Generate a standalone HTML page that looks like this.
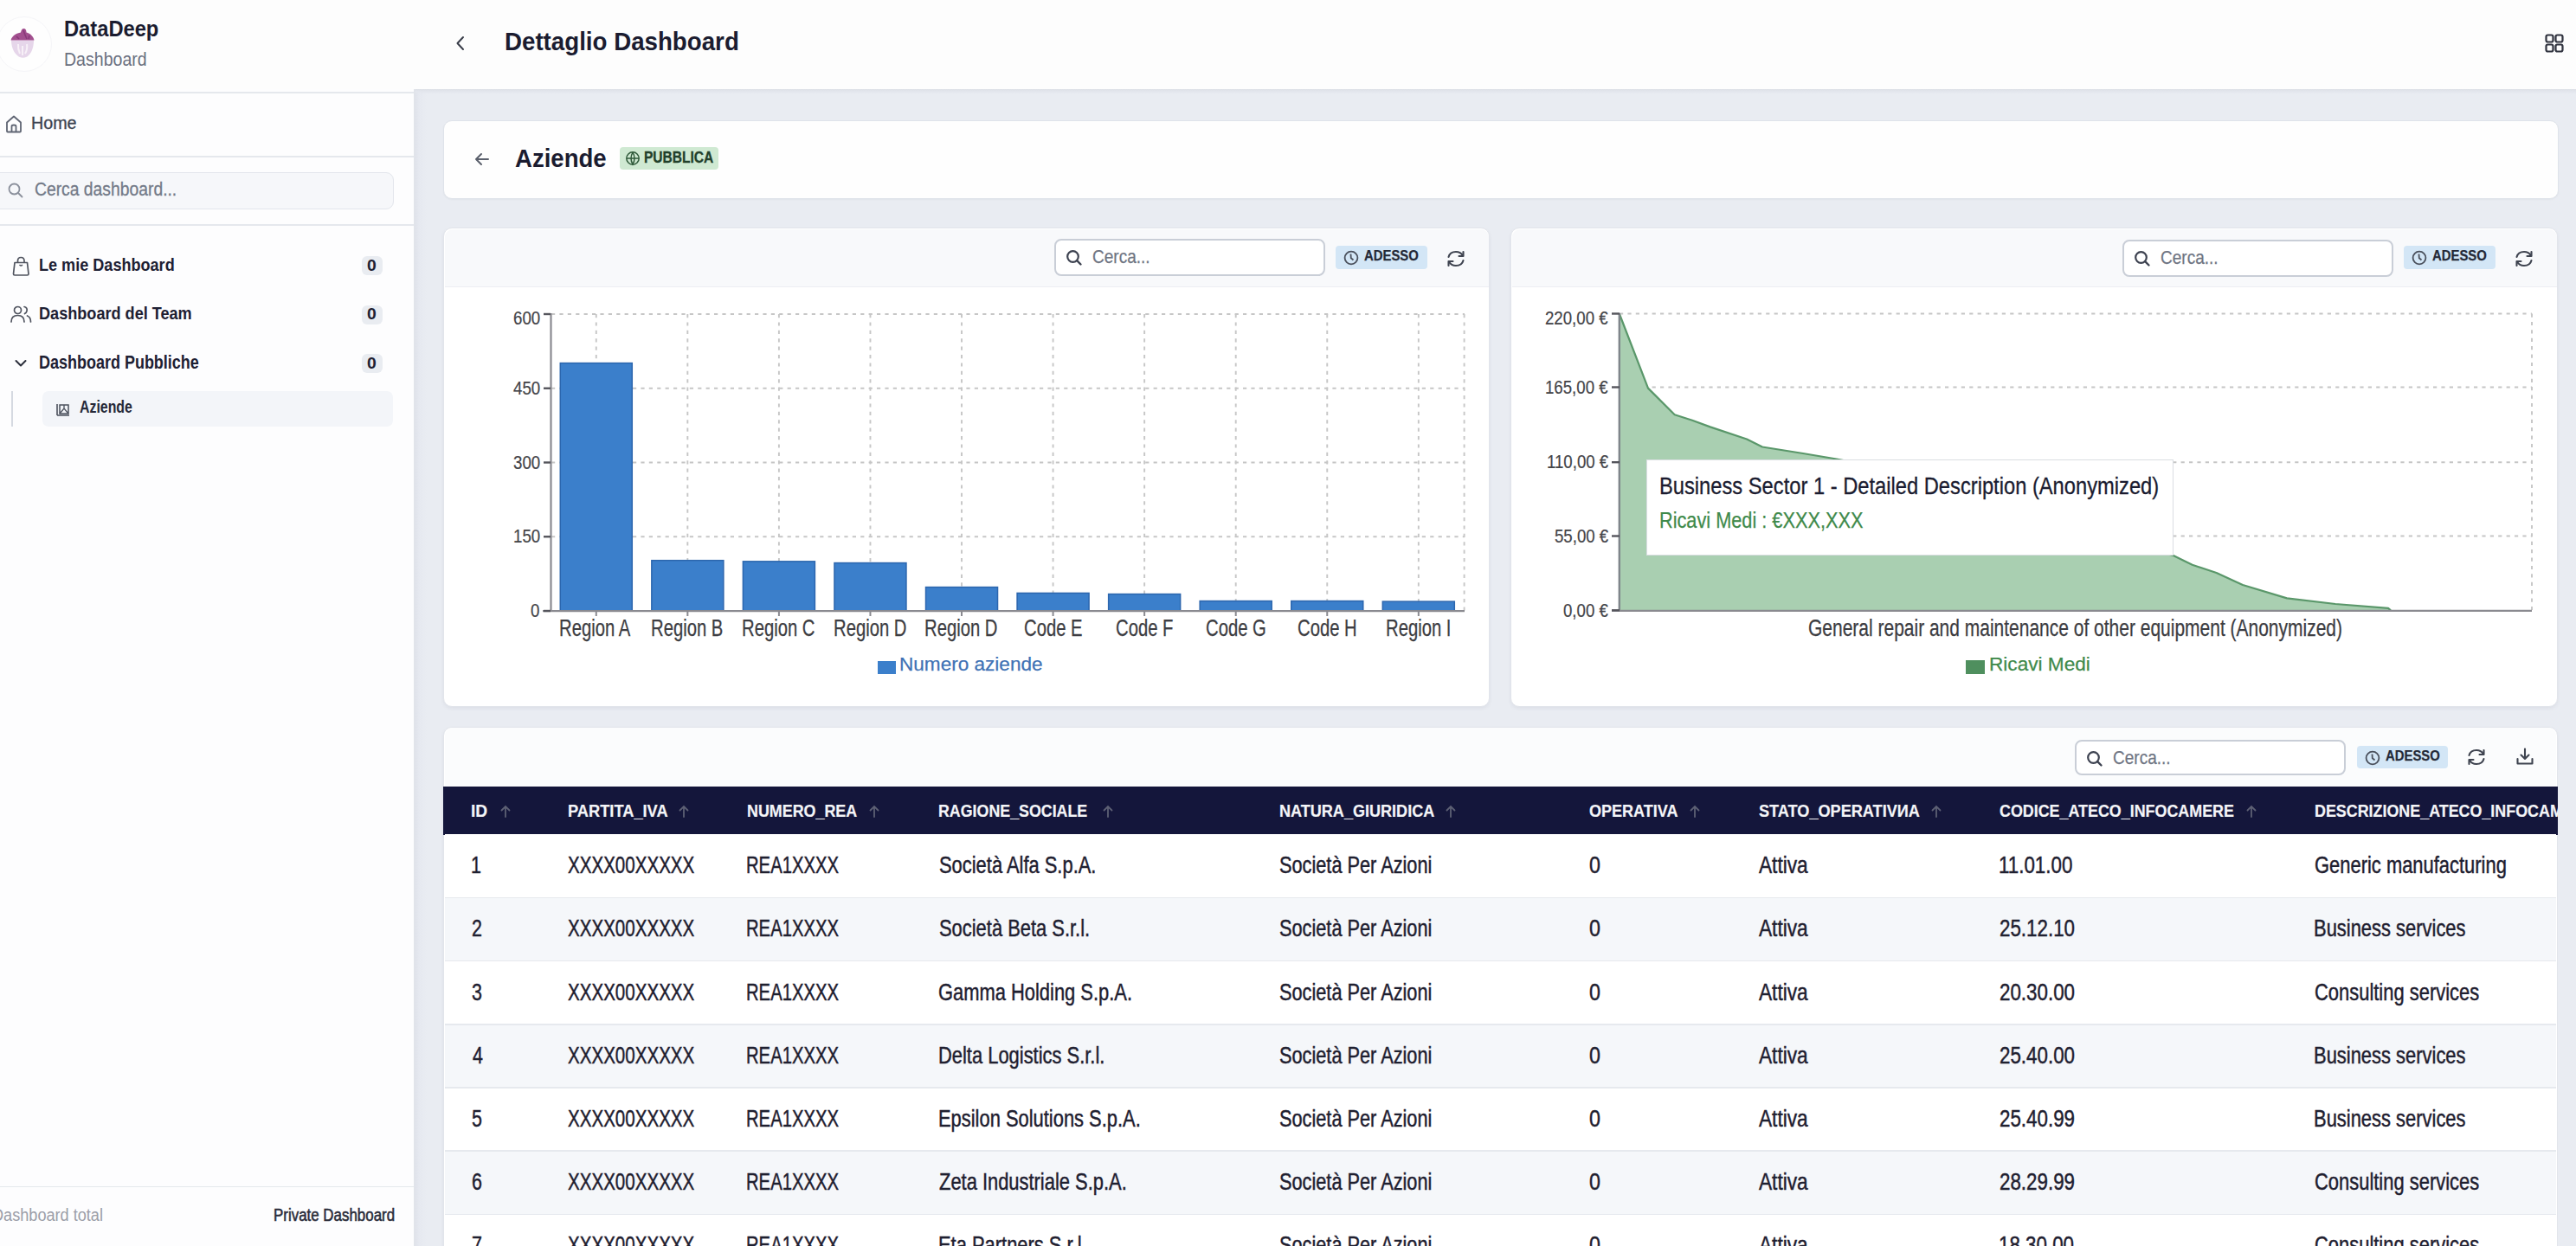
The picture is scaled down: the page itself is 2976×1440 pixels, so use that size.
<!DOCTYPE html>
<html><head><meta charset="utf-8"><style>
html,body{margin:0;padding:0;}
body{width:2976px;height:1440px;overflow:hidden;position:relative;background:#e9ecf2;font-family:"Liberation Sans",sans-serif;}
.t{position:absolute;white-space:pre;transform-origin:0 0;}
</style></head><body>
<div style="position:absolute;left:479px;top:103px;width:14px;height:1337px;background:linear-gradient(90deg,#dfe2ea,#e6e9f0 40%,rgba(233,236,242,0));"></div>
<div style="position:absolute;left:478px;top:103px;width:2498px;height:6px;background:linear-gradient(180deg,#dcdfe6,#e3e6ed 40%,rgba(233,236,242,0));"></div>
<div style="position:absolute;left:0px;top:0px;width:2976px;height:103px;background:#fdfdfd;"></div>
<div style="position:absolute;left:0px;top:103px;width:478px;height:1337px;background:#fdfdfe;"></div>
<div style="position:absolute;left:478px;top:103px;width:1.5px;height:1337px;background:#e1e4ea;"></div>
<div style="position:absolute;left:0px;top:106px;width:478px;height:1.5px;background:#e5e8ed;"></div>
<div style="position:absolute;left:0px;top:180px;width:478px;height:1.5px;background:#e5e8ed;"></div>
<div style="position:absolute;left:0px;top:259px;width:478px;height:1.5px;background:#e5e8ed;"></div>
<div style="position:absolute;left:0px;top:1370.5px;width:478px;height:1.5px;background:#e5e8ed;"></div>
<div style="position:absolute;left:-4px;top:19px;width:62px;height:62px;border-radius:50%;border:1px solid #f5f5f8;background:#fefefe"></div>
<svg style="position:absolute;left:12px;top:32px" width="28" height="36" viewBox="0 0 28 36">
<path d="M1 14.5 L27 14.5 C27 22 25 28 21 32 C18 35.5 11 35.5 8 32 C3.5 28 1 22 1 14.5 Z" fill="#e6d6ea"/>
<path d="M9 19 Q8.5 25 11 30 M19 19 Q20 25 17 30 M14 21 L14 32" stroke="#f7f0f7" stroke-width="2" fill="none"/>
<path d="M0.5 14.5 C2 9 7 6.5 12 5.5 C12.5 3 13.5 1 15.5 1 C17.5 1 18.5 3 18.5 5.5 C23 6.5 26.5 10 27.5 14.5 Z" fill="#a2508f"/>
<path d="M15 3 C16 6 17 9 19 13 M7 10 L10 13 M22 9 L21 13" stroke="#7e2f70" stroke-width="1.6" fill="none" opacity="0.7"/>
</svg>
<svg style="position:absolute;left:6px;top:132px" width="20" height="22" viewBox="0 0 20 22"><path d="M2 9.5 L10 2.5 L18 9.5 L18 19.5 Q18 20.5 17 20.5 L3 20.5 Q2 20.5 2 19.5 Z M7.5 20.5 L7.5 14 Q7.5 12.5 10 12.5 Q12.5 12.5 12.5 14 L12.5 20.5" fill="none" stroke="#5f6573" stroke-width="1.8" stroke-linejoin="round"/></svg>
<div style="position:absolute;left:-10px;top:198.5px;width:464.5px;height:43px;background:#f6f7fa;border:1.5px solid #e3e6ec;border-radius:9px;box-sizing:border-box;"></div>
<svg style="position:absolute;left:8px;top:210px" width="20" height="20" viewBox="0 0 20 20"><circle cx="8.5" cy="8.5" r="6" fill="none" stroke="#8b909c" stroke-width="1.8"/><path d="M13 13 L17.5 17.5" stroke="#8b909c" stroke-width="1.8" stroke-linecap="round"/></svg>
<svg style="position:absolute;left:13px;top:295px" width="22" height="26" viewBox="0 0 22 26"><path d="M4 8.5 L18.5 8.5 L20 21.5 Q20 23 18.5 23 L4 23 Q2.5 23 2.5 21.5 Z" fill="none" stroke="#50545f" stroke-width="1.7" stroke-linejoin="round"/><path d="M7.5 8.5 L7.5 6.5 Q7.5 2.5 11.2 2.5 Q15 2.5 15 6.5 L15 8.5" fill="none" stroke="#50545f" stroke-width="1.7"/><path d="M9.5 11 Q11.2 13 13 11" fill="none" stroke="#50545f" stroke-width="1.3"/></svg>
<svg style="position:absolute;left:11px;top:352px" width="27" height="22" viewBox="0 0 27 22"><circle cx="9.5" cy="6.5" r="4" fill="none" stroke="#50545f" stroke-width="1.7"/><path d="M2 20 Q2 12.5 9.5 12.5 Q17 12.5 17 20" fill="none" stroke="#50545f" stroke-width="1.7" stroke-linecap="round"/><path d="M17 2.5 Q21 3.5 20 7.5 Q19.5 9.5 17.5 10.5 M20.5 13 Q24.5 14.5 24.5 20" fill="none" stroke="#50545f" stroke-width="1.7" stroke-linecap="round"/></svg>
<svg style="position:absolute;left:16px;top:413px" width="16" height="14" viewBox="0 0 16 14"><path d="M2.5 4 L8 9.5 L13.5 4" fill="none" stroke="#2a2d3a" stroke-width="2" stroke-linecap="round" stroke-linejoin="round"/></svg>
<div style="position:absolute;left:418px;top:296px;width:23.5px;height:22px;background:#e9ecf1;border-radius:6px;"></div>
<div style="position:absolute;left:418px;top:352.5px;width:23.5px;height:22px;background:#e9ecf1;border-radius:6px;"></div>
<div style="position:absolute;left:418px;top:408.5px;width:23.5px;height:22px;background:#e9ecf1;border-radius:6px;"></div>
<div style="position:absolute;left:13px;top:451.5px;width:2px;height:41.5px;background:#d5d9e1;"></div>
<div style="position:absolute;left:49px;top:451.5px;width:405px;height:41px;background:#f3f5f9;border-radius:7px;"></div>
<svg style="position:absolute;left:64px;top:464px" width="18" height="18" viewBox="0 0 18 18"><path d="M2 16 L2 3 M2 16 L16 16" stroke="#4b505c" stroke-width="1.6" fill="none"/><rect x="5" y="4" width="10" height="10" fill="none" stroke="#4b505c" stroke-width="1.5"/><path d="M5 14 L10 8 L15 14 M10 4 L10 8" stroke="#4b505c" stroke-width="1.3" fill="none"/></svg>
<svg style="position:absolute;left:524px;top:40px" width="16" height="20" viewBox="0 0 16 20"><path d="M11 3 L4.5 10 L11 17" fill="none" stroke="#3a3e4a" stroke-width="2" stroke-linecap="round" stroke-linejoin="round"/></svg>
<svg style="position:absolute;left:2939px;top:38px" width="24" height="24" viewBox="0 0 24 24"><g fill="none" stroke="#30333f" stroke-width="2.2"><rect x="2.5" y="2.5" width="8" height="8" rx="2"/><rect x="13.5" y="2.5" width="8" height="8" rx="2"/><rect x="2.5" y="13.5" width="8" height="8" rx="2"/><rect x="13.5" y="13.5" width="8" height="8" rx="2"/></g></svg>
<div style="position:absolute;left:512px;top:138.5px;width:2443.5px;height:91px;background:#fefefe;border:1.5px solid #dfe3ea;border-radius:10px;box-sizing:border-box;box-shadow:0 1px 2px rgba(30,40,60,0.04);"></div>
<svg style="position:absolute;left:546px;top:175px" width="22" height="18" viewBox="0 0 22 18"><path d="M18 9 L4 9 M10 3 L4 9 L10 15" fill="none" stroke="#5b606c" stroke-width="2" stroke-linecap="round" stroke-linejoin="round"/></svg>
<div style="position:absolute;left:716px;top:170px;width:114px;height:26px;background:#cfe9d2;border-radius:4px;"></div>
<svg style="position:absolute;left:722px;top:174px" width="18" height="18" viewBox="0 0 18 18"><g fill="none" stroke="#2f5a3a" stroke-width="1.5"><circle cx="9" cy="9" r="7.2"/><path d="M2 9 L16 9 M9 2 Q5 9 9 16 Q13 9 9 2"/></g></svg>
<div style="position:absolute;left:512px;top:263px;width:1209px;height:554px;background:#ffffff;border:1.5px solid #e2e5eb;border-radius:10px;box-sizing:border-box;box-shadow:0 2px 4px rgba(30,40,70,0.06);overflow:hidden;"></div>
<div style="position:absolute;left:513.5px;top:264.5px;width:1206px;height:66.0px;background:#f8f9fb;border-radius:9px 9px 0 0;"></div>
<div style="position:absolute;left:513.5px;top:330.5px;width:1206px;height:1.5px;background:#eceef2;"></div>
<div style="position:absolute;left:1745px;top:263px;width:1210px;height:554px;background:#ffffff;border:1.5px solid #e2e5eb;border-radius:10px;box-sizing:border-box;box-shadow:0 2px 4px rgba(30,40,70,0.06);overflow:hidden;"></div>
<div style="position:absolute;left:1746.5px;top:264.5px;width:1207px;height:66.0px;background:#f8f9fb;border-radius:9px 9px 0 0;"></div>
<div style="position:absolute;left:1746.5px;top:330.5px;width:1207px;height:1.5px;background:#eceef2;"></div>
<div style="position:absolute;left:1218px;top:276px;width:313px;height:43px;background:#fff;border:2px solid #c9ced7;border-radius:8px;box-sizing:border-box;"></div>
<svg style="position:absolute;left:1230px;top:287px" width="22" height="22" viewBox="0 0 22 22"><circle cx="9.5" cy="9.5" r="6.3" fill="none" stroke="#3d4250" stroke-width="2.2"/><path d="M14.2 14.2 L18.5 18.5" stroke="#3d4250" stroke-width="2.4" stroke-linecap="round"/></svg>
<div style="position:absolute;left:1543px;top:284px;width:106px;height:27px;background:#d3e6f6;border-radius:4px;"></div>
<svg style="position:absolute;left:1552px;top:288.5px" width="18" height="18" viewBox="0 0 18 18"><g fill="none" stroke="#4a505c" stroke-width="1.8"><circle cx="9" cy="9" r="7.4"/><path d="M8.5 4.5 L8.8 9.2 L11.5 11.5"/></g></svg>
<svg style="position:absolute;left:1670px;top:288px" width="24" height="22" viewBox="0 0 24 22"><g fill="none" stroke="#3f4450" stroke-width="2.1" stroke-linecap="round" stroke-linejoin="round"><path d="M3.5 9 Q5 3 12 3 Q17.5 3 20 7.5"/><path d="M20.5 3 L20.5 8 L15.5 8"/><path d="M20.5 13 Q19 19 12 19 Q6.5 19 4 14.5"/><path d="M3.5 19 L3.5 14 L8.5 14"/></g></svg>
<div style="position:absolute;left:2452px;top:276.5px;width:313px;height:43px;background:#fff;border:2px solid #c9ced7;border-radius:8px;box-sizing:border-box;"></div>
<svg style="position:absolute;left:2464px;top:287.5px" width="22" height="22" viewBox="0 0 22 22"><circle cx="9.5" cy="9.5" r="6.3" fill="none" stroke="#3d4250" stroke-width="2.2"/><path d="M14.2 14.2 L18.5 18.5" stroke="#3d4250" stroke-width="2.4" stroke-linecap="round"/></svg>
<div style="position:absolute;left:2777px;top:284px;width:106px;height:27px;background:#d3e6f6;border-radius:4px;"></div>
<svg style="position:absolute;left:2786px;top:288.5px" width="18" height="18" viewBox="0 0 18 18"><g fill="none" stroke="#4a505c" stroke-width="1.8"><circle cx="9" cy="9" r="7.4"/><path d="M8.5 4.5 L8.8 9.2 L11.5 11.5"/></g></svg>
<svg style="position:absolute;left:2904px;top:288px" width="24" height="22" viewBox="0 0 24 22"><g fill="none" stroke="#3f4450" stroke-width="2.1" stroke-linecap="round" stroke-linejoin="round"><path d="M3.5 9 Q5 3 12 3 Q17.5 3 20 7.5"/><path d="M20.5 3 L20.5 8 L15.5 8"/><path d="M20.5 13 Q19 19 12 19 Q6.5 19 4 14.5"/><path d="M3.5 19 L3.5 14 L8.5 14"/></g></svg>
<svg style="position:absolute;left:0;top:0" width="2976" height="1440" viewBox="0 0 2976 1440">
<line x1="637" y1="620.25" x2="1692" y2="620.25" stroke="#c6c6c6" stroke-width="1.9" stroke-dasharray="4.2 5.2" fill="none"/>
<line x1="637" y1="534.5" x2="1692" y2="534.5" stroke="#c6c6c6" stroke-width="1.9" stroke-dasharray="4.2 5.2" fill="none"/>
<line x1="637" y1="448.75" x2="1692" y2="448.75" stroke="#c6c6c6" stroke-width="1.9" stroke-dasharray="4.2 5.2" fill="none"/>
<line x1="637" y1="363.0" x2="1692" y2="363.0" stroke="#c6c6c6" stroke-width="1.9" stroke-dasharray="4.2 5.2" fill="none"/>
<line x1="688.78" y1="363" x2="688.78" y2="706" stroke="#c6c6c6" stroke-width="1.9" stroke-dasharray="4.2 5.2" fill="none"/>
<line x1="794.3399999999999" y1="363" x2="794.3399999999999" y2="706" stroke="#c6c6c6" stroke-width="1.9" stroke-dasharray="4.2 5.2" fill="none"/>
<line x1="899.9" y1="363" x2="899.9" y2="706" stroke="#c6c6c6" stroke-width="1.9" stroke-dasharray="4.2 5.2" fill="none"/>
<line x1="1005.46" y1="363" x2="1005.46" y2="706" stroke="#c6c6c6" stroke-width="1.9" stroke-dasharray="4.2 5.2" fill="none"/>
<line x1="1111.02" y1="363" x2="1111.02" y2="706" stroke="#c6c6c6" stroke-width="1.9" stroke-dasharray="4.2 5.2" fill="none"/>
<line x1="1216.58" y1="363" x2="1216.58" y2="706" stroke="#c6c6c6" stroke-width="1.9" stroke-dasharray="4.2 5.2" fill="none"/>
<line x1="1322.1399999999999" y1="363" x2="1322.1399999999999" y2="706" stroke="#c6c6c6" stroke-width="1.9" stroke-dasharray="4.2 5.2" fill="none"/>
<line x1="1427.6999999999998" y1="363" x2="1427.6999999999998" y2="706" stroke="#c6c6c6" stroke-width="1.9" stroke-dasharray="4.2 5.2" fill="none"/>
<line x1="1533.2599999999998" y1="363" x2="1533.2599999999998" y2="706" stroke="#c6c6c6" stroke-width="1.9" stroke-dasharray="4.2 5.2" fill="none"/>
<line x1="1638.82" y1="363" x2="1638.82" y2="706" stroke="#c6c6c6" stroke-width="1.9" stroke-dasharray="4.2 5.2" fill="none"/>
<line x1="1691.6" y1="363" x2="1691.6" y2="706" stroke="#c6c6c6" stroke-width="1.9" stroke-dasharray="4.2 5.2" fill="none"/>
<rect x="647.28" y="419.595" width="83" height="286.405" fill="#3b7fcb" stroke="#2c66ae" stroke-width="1.5"/>
<rect x="752.8399999999999" y="647.69" width="83" height="58.309999999999945" fill="#3b7fcb" stroke="#2c66ae" stroke-width="1.5"/>
<rect x="858.4" y="648.8333333333334" width="83" height="57.16666666666663" fill="#3b7fcb" stroke="#2c66ae" stroke-width="1.5"/>
<rect x="963.96" y="650.5483333333333" width="83" height="55.45166666666671" fill="#3b7fcb" stroke="#2c66ae" stroke-width="1.5"/>
<rect x="1069.52" y="678.56" width="83" height="27.440000000000055" fill="#3b7fcb" stroke="#2c66ae" stroke-width="1.5"/>
<rect x="1175.08" y="685.42" width="83" height="20.58000000000004" fill="#3b7fcb" stroke="#2c66ae" stroke-width="1.5"/>
<rect x="1280.6399999999999" y="686.5633333333333" width="83" height="19.436666666666724" fill="#3b7fcb" stroke="#2c66ae" stroke-width="1.5"/>
<rect x="1386.1999999999998" y="694.5666666666667" width="83" height="11.43333333333328" fill="#3b7fcb" stroke="#2c66ae" stroke-width="1.5"/>
<rect x="1491.7599999999998" y="694.5666666666667" width="83" height="11.43333333333328" fill="#3b7fcb" stroke="#2c66ae" stroke-width="1.5"/>
<rect x="1597.32" y="695.1383333333333" width="83" height="10.861666666666679" fill="#3b7fcb" stroke="#2c66ae" stroke-width="1.5"/>
<line x1="636.5" y1="362" x2="636.5" y2="707" stroke="#8a8a90" stroke-width="2.2"/>
<line x1="627" y1="706.2" x2="1692" y2="706.2" stroke="#8a8a90" stroke-width="2.2"/>
<line x1="628" y1="706.0" x2="636" y2="706.0" stroke="#55555c" stroke-width="2.4"/>
<line x1="628" y1="620.25" x2="636" y2="620.25" stroke="#55555c" stroke-width="2.4"/>
<line x1="628" y1="534.5" x2="636" y2="534.5" stroke="#55555c" stroke-width="2.4"/>
<line x1="628" y1="448.75" x2="636" y2="448.75" stroke="#55555c" stroke-width="2.4"/>
<line x1="628" y1="363.0" x2="636" y2="363.0" stroke="#55555c" stroke-width="2.4"/>
<line x1="688.78" y1="706" x2="688.78" y2="712" stroke="#8a8a90" stroke-width="2"/>
<line x1="794.3399999999999" y1="706" x2="794.3399999999999" y2="712" stroke="#8a8a90" stroke-width="2"/>
<line x1="899.9" y1="706" x2="899.9" y2="712" stroke="#8a8a90" stroke-width="2"/>
<line x1="1005.46" y1="706" x2="1005.46" y2="712" stroke="#8a8a90" stroke-width="2"/>
<line x1="1111.02" y1="706" x2="1111.02" y2="712" stroke="#8a8a90" stroke-width="2"/>
<line x1="1216.58" y1="706" x2="1216.58" y2="712" stroke="#8a8a90" stroke-width="2"/>
<line x1="1322.1399999999999" y1="706" x2="1322.1399999999999" y2="712" stroke="#8a8a90" stroke-width="2"/>
<line x1="1427.6999999999998" y1="706" x2="1427.6999999999998" y2="712" stroke="#8a8a90" stroke-width="2"/>
<line x1="1533.2599999999998" y1="706" x2="1533.2599999999998" y2="712" stroke="#8a8a90" stroke-width="2"/>
<line x1="1638.82" y1="706" x2="1638.82" y2="712" stroke="#8a8a90" stroke-width="2"/>
<g stroke="#c6c6c6" stroke-width="1.9" stroke-dasharray="4.2 5.2" fill="none">
<line x1="1871" y1="362.5" x2="2925" y2="362.5"/>
<line x1="1871" y1="447.5" x2="2925" y2="447.5"/>
<line x1="1871" y1="534.2" x2="2925" y2="534.2"/>
<line x1="1871" y1="619.5" x2="2925" y2="619.5"/>
<line x1="2925" y1="362.5" x2="2925" y2="705"/></g>
<path d="M1870.8,362.5 L1904,448.6 L1934.7,479.3 L1955,485.7 L1975.7,493.4 L2018,507.5 L2036,516.5 L2083,524 L2121.7,530.5 L2200,545 L2300,575 L2400,605 L2480,635 L2510.8,642 L2532.7,652.8 L2560.6,662 L2591,676 L2642,691.4 L2698,698 L2759,702.8 L2762,705.3 L1870.8,705.3 Z" fill="#a9cfb1"/>
<path d="M1870.8,362.5 L1904,448.6 L1934.7,479.3 L1955,485.7 L1975.7,493.4 L2018,507.5 L2036,516.5 L2083,524 L2121.7,530.5 L2200,545 L2300,575 L2400,605 L2480,635 L2510.8,642 L2532.7,652.8 L2560.6,662 L2591,676 L2642,691.4 L2698,698 L2759,702.8 L2762,705.3" fill="none" stroke="#5a976a" stroke-width="2.2" stroke-linejoin="round"/>
<line x1="1870.8" y1="362" x2="1870.8" y2="706" stroke="#7f858a" stroke-width="2.4"/>
<line x1="1862" y1="705.8" x2="2925" y2="705.8" stroke="#8a8a90" stroke-width="2.2"/>
<line x1="1862" y1="362.5" x2="1871" y2="362.5" stroke="#55555c" stroke-width="2.4"/>
<line x1="1862" y1="447.5" x2="1871" y2="447.5" stroke="#55555c" stroke-width="2.4"/>
<line x1="1862" y1="534.2" x2="1871" y2="534.2" stroke="#55555c" stroke-width="2.4"/>
<line x1="1862" y1="619.5" x2="1871" y2="619.5" stroke="#55555c" stroke-width="2.4"/>
<line x1="1862" y1="705.3" x2="1871" y2="705.3" stroke="#55555c" stroke-width="2.4"/>
</svg>
<div style="position:absolute;left:1014px;top:763.6px;width:21px;height:15px;background:#3b7fcb;"></div>
<div style="position:absolute;left:1902px;top:530.8px;width:609px;height:111px;background:#fff;border:1px solid #dadde2;box-sizing:border-box;"></div>
<div style="position:absolute;left:2271px;top:762.7px;width:22px;height:16px;background:#4f8f5e;"></div>
<div style="position:absolute;left:512px;top:839.5px;width:2442.5px;height:700px;background:#fff;border:1.5px solid #e2e5eb;border-radius:10px;box-sizing:border-box;box-shadow:0 2px 4px rgba(30,40,70,0.06);"></div>
<div style="position:absolute;left:513.5px;top:841px;width:2439.5px;height:68px;background:#fbfcfd;border-radius:9px 9px 0 0;"></div>
<div style="position:absolute;left:2396.5px;top:854.5px;width:313px;height:41px;background:#fff;border:2px solid #c9ced7;border-radius:8px;box-sizing:border-box;"></div>
<svg style="position:absolute;left:2408.5px;top:865.5px" width="22" height="22" viewBox="0 0 22 22"><circle cx="9.5" cy="9.5" r="6.3" fill="none" stroke="#3d4250" stroke-width="2.2"/><path d="M14.2 14.2 L18.5 18.5" stroke="#3d4250" stroke-width="2.4" stroke-linecap="round"/></svg>
<div style="position:absolute;left:2723px;top:862px;width:105px;height:26px;background:#d3e6f6;border-radius:4px;"></div>
<svg style="position:absolute;left:2732px;top:866.5px" width="18" height="18" viewBox="0 0 18 18"><g fill="none" stroke="#4a505c" stroke-width="1.8"><circle cx="9" cy="9" r="7.4"/><path d="M8.5 4.5 L8.8 9.2 L11.5 11.5"/></g></svg>
<svg style="position:absolute;left:2849px;top:864px" width="24" height="22" viewBox="0 0 24 22"><g fill="none" stroke="#3f4450" stroke-width="2.1" stroke-linecap="round" stroke-linejoin="round"><path d="M3.5 9 Q5 3 12 3 Q17.5 3 20 7.5"/><path d="M20.5 3 L20.5 8 L15.5 8"/><path d="M20.5 13 Q19 19 12 19 Q6.5 19 4 14.5"/><path d="M3.5 19 L3.5 14 L8.5 14"/></g></svg>
<svg style="position:absolute;left:2905px;top:863px" width="24" height="22" viewBox="0 0 24 22"><g fill="none" stroke="#3f4450" stroke-width="2.1" stroke-linecap="round" stroke-linejoin="round"><path d="M12 2.5 L12 13.5 M7.5 9.5 L12 14 L16.5 9.5"/><path d="M3.5 14 L3.5 19.5 L20.5 19.5 L20.5 14"/></g></svg>
<div style="position:absolute;left:512px;top:909px;width:2442.5px;height:55.5px;background:#14163b;"></div>
<svg style="position:absolute;left:577.5px;top:930px" width="12" height="15" viewBox="0 0 12 15"><path d="M6 14 L6 2 M1.5 6.5 L6 2 L10.5 6.5" fill="none" stroke="#5d6074" stroke-width="1.8" stroke-linecap="round"/></svg>
<svg style="position:absolute;left:783.7px;top:930px" width="12" height="15" viewBox="0 0 12 15"><path d="M6 14 L6 2 M1.5 6.5 L6 2 L10.5 6.5" fill="none" stroke="#5d6074" stroke-width="1.8" stroke-linecap="round"/></svg>
<svg style="position:absolute;left:1004px;top:930px" width="12" height="15" viewBox="0 0 12 15"><path d="M6 14 L6 2 M1.5 6.5 L6 2 L10.5 6.5" fill="none" stroke="#5d6074" stroke-width="1.8" stroke-linecap="round"/></svg>
<svg style="position:absolute;left:1274px;top:930px" width="12" height="15" viewBox="0 0 12 15"><path d="M6 14 L6 2 M1.5 6.5 L6 2 L10.5 6.5" fill="none" stroke="#5d6074" stroke-width="1.8" stroke-linecap="round"/></svg>
<svg style="position:absolute;left:1670px;top:930px" width="12" height="15" viewBox="0 0 12 15"><path d="M6 14 L6 2 M1.5 6.5 L6 2 L10.5 6.5" fill="none" stroke="#5d6074" stroke-width="1.8" stroke-linecap="round"/></svg>
<svg style="position:absolute;left:1952px;top:930px" width="12" height="15" viewBox="0 0 12 15"><path d="M6 14 L6 2 M1.5 6.5 L6 2 L10.5 6.5" fill="none" stroke="#5d6074" stroke-width="1.8" stroke-linecap="round"/></svg>
<svg style="position:absolute;left:2231px;top:930px" width="12" height="15" viewBox="0 0 12 15"><path d="M6 14 L6 2 M1.5 6.5 L6 2 L10.5 6.5" fill="none" stroke="#5d6074" stroke-width="1.8" stroke-linecap="round"/></svg>
<svg style="position:absolute;left:2595px;top:930px" width="12" height="15" viewBox="0 0 12 15"><path d="M6 14 L6 2 M1.5 6.5 L6 2 L10.5 6.5" fill="none" stroke="#5d6074" stroke-width="1.8" stroke-linecap="round"/></svg>
<div style="position:absolute;left:513.5px;top:964.2px;width:2439.5px;height:73.2px;background:#ffffff;"></div>
<div style="position:absolute;left:513.5px;top:1037.4px;width:2439.5px;height:73.2px;background:#f5f7fa;"></div>
<div style="position:absolute;left:513.5px;top:1036.65px;width:2439.5px;height:1.5px;background:#e6e9ee;"></div>
<div style="position:absolute;left:513.5px;top:1110.6000000000001px;width:2439.5px;height:73.2px;background:#ffffff;"></div>
<div style="position:absolute;left:513.5px;top:1109.8500000000001px;width:2439.5px;height:1.5px;background:#e6e9ee;"></div>
<div style="position:absolute;left:513.5px;top:1183.8000000000002px;width:2439.5px;height:73.2px;background:#f5f7fa;"></div>
<div style="position:absolute;left:513.5px;top:1183.0500000000002px;width:2439.5px;height:1.5px;background:#e6e9ee;"></div>
<div style="position:absolute;left:513.5px;top:1257.0px;width:2439.5px;height:73.2px;background:#ffffff;"></div>
<div style="position:absolute;left:513.5px;top:1256.25px;width:2439.5px;height:1.5px;background:#e6e9ee;"></div>
<div style="position:absolute;left:513.5px;top:1330.2px;width:2439.5px;height:73.2px;background:#f5f7fa;"></div>
<div style="position:absolute;left:513.5px;top:1329.45px;width:2439.5px;height:1.5px;background:#e6e9ee;"></div>
<div style="position:absolute;left:513.5px;top:1403.4px;width:2439.5px;height:73.2px;background:#ffffff;"></div>
<div style="position:absolute;left:513.5px;top:1402.65px;width:2439.5px;height:1.5px;background:#e6e9ee;"></div>
<div class="t" style="left:74.38px;top:22.06px;font-size:24.85px;line-height:24.85px;font-weight:700;color:#1b1c30;transform:scaleX(0.9541);">DataDeep</div>
<div class="t" style="left:74.24px;top:57.74px;font-size:21.80px;line-height:21.80px;font-weight:400;color:#6b7080;transform:scaleX(0.8969);">Dashboard</div>
<div class="t" style="left:36.42px;top:132.15px;font-size:20.49px;line-height:20.49px;font-weight:400;color:#3d4452;transform:scaleX(0.9620);-webkit-text-stroke:0.35px #3d4452;">Home</div>
<div class="t" style="left:40.03px;top:208.04px;font-size:21.80px;line-height:21.80px;font-weight:400;color:#737a88;transform:scaleX(0.8859);-webkit-text-stroke:0.30px #737a88;">Cerca dashboard...</div>
<div class="t" style="left:44.91px;top:295.72px;font-size:20.64px;line-height:20.64px;font-weight:700;color:#1e2033;transform:scaleX(0.8763);">Le mie Dashboard</div>
<div class="t" style="left:44.91px;top:352.20px;font-size:20.78px;line-height:20.78px;font-weight:700;color:#1e2033;transform:scaleX(0.8717);">Dashboard del Team</div>
<div class="t" style="left:44.92px;top:408.43px;font-size:21.22px;line-height:21.22px;font-weight:700;color:#1e2033;transform:scaleX(0.8474);">Dashboard Pubbliche</div>
<div class="t" style="left:423.92px;top:298.73px;font-size:17.44px;line-height:17.44px;font-weight:700;color:#1e2033;transform:scaleX(1.1116);">0</div>
<div class="t" style="left:423.92px;top:355.23px;font-size:17.44px;line-height:17.44px;font-weight:700;color:#1e2033;transform:scaleX(1.1116);">0</div>
<div class="t" style="left:423.92px;top:411.53px;font-size:17.44px;line-height:17.44px;font-weight:700;color:#1e2033;transform:scaleX(1.1116);">0</div>
<div class="t" style="left:91.98px;top:461.34px;font-size:19.91px;line-height:19.91px;font-weight:700;color:#262938;transform:scaleX(0.7981);">Aziende</div>
<div class="t" style="left:-9.45px;top:1394.86px;font-size:19.77px;line-height:19.77px;font-weight:400;color:#9b9ea8;transform:scaleX(0.9170);">Dashboard total</div>
<div class="t" style="left:316.05px;top:1394.86px;font-size:19.77px;line-height:19.77px;font-weight:400;color:#2a2c3a;transform:scaleX(0.8558);-webkit-text-stroke:0.55px #2a2c3a;">Private Dashboard</div>
<div class="t" style="left:582.54px;top:33.25px;font-size:29.94px;line-height:29.94px;font-weight:700;color:#1b1c30;transform:scaleX(0.9250);">Dettaglio Dashboard</div>
<div class="t" style="left:594.85px;top:167.65px;font-size:29.94px;line-height:29.94px;font-weight:700;color:#1b1c30;transform:scaleX(0.9205);">Aziende</div>
<div class="t" style="left:744.07px;top:172.65px;font-size:18.60px;line-height:18.60px;font-weight:700;color:#22402b;transform:scaleX(0.8352);-webkit-text-stroke:0.30px #22402b;">PUBBLICA</div>
<div class="t" style="left:1262.05px;top:286.04px;font-size:21.80px;line-height:21.80px;font-weight:400;color:#6f7583;transform:scaleX(0.8728);-webkit-text-stroke:0.25px #6f7583;">Cerca...</div>
<div class="t" style="left:1575.70px;top:288.35px;font-size:16.72px;line-height:16.72px;font-weight:700;color:#252a38;transform:scaleX(0.8905);-webkit-text-stroke:0.25px #252a38;">ADESSO</div>
<div class="t" style="left:2496.05px;top:286.54px;font-size:21.80px;line-height:21.80px;font-weight:400;color:#6f7583;transform:scaleX(0.8728);-webkit-text-stroke:0.25px #6f7583;">Cerca...</div>
<div class="t" style="left:2809.70px;top:288.35px;font-size:16.72px;line-height:16.72px;font-weight:700;color:#252a38;transform:scaleX(0.8905);-webkit-text-stroke:0.25px #252a38;">ADESSO</div>
<div class="t" style="left:592.51px;top:356.67px;font-size:22.24px;line-height:22.24px;font-weight:400;color:#444448;transform:scaleX(0.8400);-webkit-text-stroke:0.20px #444448;">600</div>
<div class="t" style="left:592.51px;top:437.97px;font-size:22.24px;line-height:22.24px;font-weight:400;color:#444448;transform:scaleX(0.8400);-webkit-text-stroke:0.20px #444448;">450</div>
<div class="t" style="left:592.51px;top:523.77px;font-size:22.24px;line-height:22.24px;font-weight:400;color:#444448;transform:scaleX(0.8400);-webkit-text-stroke:0.20px #444448;">300</div>
<div class="t" style="left:592.51px;top:609.47px;font-size:22.24px;line-height:22.24px;font-weight:400;color:#444448;transform:scaleX(0.8400);-webkit-text-stroke:0.20px #444448;">150</div>
<div class="t" style="left:613.29px;top:695.27px;font-size:22.24px;line-height:22.24px;font-weight:400;color:#444448;transform:scaleX(0.8400);-webkit-text-stroke:0.20px #444448;">0</div>
<div class="t" style="left:646.24px;top:713.06px;font-size:26.74px;line-height:26.74px;font-weight:400;color:#3d3d42;transform:scaleX(0.7580);-webkit-text-stroke:0.25px #3d3d42;">Region A</div>
<div class="t" style="left:752.31px;top:713.06px;font-size:26.74px;line-height:26.74px;font-weight:400;color:#3d3d42;transform:scaleX(0.7580);-webkit-text-stroke:0.25px #3d3d42;">Region B</div>
<div class="t" style="left:857.16px;top:713.06px;font-size:26.74px;line-height:26.74px;font-weight:400;color:#3d3d42;transform:scaleX(0.7580);-webkit-text-stroke:0.25px #3d3d42;">Region C</div>
<div class="t" style="left:962.82px;top:713.06px;font-size:26.74px;line-height:26.74px;font-weight:400;color:#3d3d42;transform:scaleX(0.7580);-webkit-text-stroke:0.25px #3d3d42;">Region D</div>
<div class="t" style="left:1068.38px;top:713.06px;font-size:26.74px;line-height:26.74px;font-weight:400;color:#3d3d42;transform:scaleX(0.7580);-webkit-text-stroke:0.25px #3d3d42;">Region D</div>
<div class="t" style="left:1182.64px;top:713.06px;font-size:26.74px;line-height:26.74px;font-weight:400;color:#3d3d42;transform:scaleX(0.7580);-webkit-text-stroke:0.25px #3d3d42;">Code E</div>
<div class="t" style="left:1288.71px;top:713.06px;font-size:26.74px;line-height:26.74px;font-weight:400;color:#3d3d42;transform:scaleX(0.7580);-webkit-text-stroke:0.25px #3d3d42;">Code F</div>
<div class="t" style="left:1392.95px;top:713.06px;font-size:26.74px;line-height:26.74px;font-weight:400;color:#3d3d42;transform:scaleX(0.7580);-webkit-text-stroke:0.25px #3d3d42;">Code G</div>
<div class="t" style="left:1499.12px;top:713.06px;font-size:26.74px;line-height:26.74px;font-weight:400;color:#3d3d42;transform:scaleX(0.7580);-webkit-text-stroke:0.25px #3d3d42;">Code H</div>
<div class="t" style="left:1601.15px;top:713.06px;font-size:26.74px;line-height:26.74px;font-weight:400;color:#3d3d42;transform:scaleX(0.7580);-webkit-text-stroke:0.25px #3d3d42;">Region I</div>
<div class="t" style="left:1039.19px;top:756.92px;font-size:22.53px;line-height:22.53px;font-weight:400;color:#3f72b5;transform:scaleX(1.0019);-webkit-text-stroke:0.25px #3f72b5;">Numero aziende</div>
<div class="t" style="left:1785.37px;top:356.67px;font-size:22.24px;line-height:22.24px;font-weight:400;color:#444448;transform:scaleX(0.8380);-webkit-text-stroke:0.20px #444448;">220,00 €</div>
<div class="t" style="left:1785.37px;top:436.77px;font-size:22.24px;line-height:22.24px;font-weight:400;color:#444448;transform:scaleX(0.8380);-webkit-text-stroke:0.20px #444448;">165,00 €</div>
<div class="t" style="left:1786.76px;top:523.47px;font-size:22.24px;line-height:22.24px;font-weight:400;color:#444448;transform:scaleX(0.8380);-webkit-text-stroke:0.20px #444448;">110,00 €</div>
<div class="t" style="left:1795.74px;top:608.77px;font-size:22.24px;line-height:22.24px;font-weight:400;color:#444448;transform:scaleX(0.8380);-webkit-text-stroke:0.20px #444448;">55,00 €</div>
<div class="t" style="left:1806.10px;top:694.57px;font-size:22.24px;line-height:22.24px;font-weight:400;color:#444448;transform:scaleX(0.8380);-webkit-text-stroke:0.20px #444448;">0,00 €</div>
<div class="t" style="left:1917.00px;top:548.07px;font-size:27.91px;line-height:27.91px;font-weight:400;color:#1b1c30;transform:scaleX(0.8496);-webkit-text-stroke:0.30px #1b1c30;">Business Sector 1 - Detailed Description (Anonymized)</div>
<div class="t" style="left:1917.16px;top:588.02px;font-size:26.31px;line-height:26.31px;font-weight:400;color:#3f8a4b;transform:scaleX(0.8260);-webkit-text-stroke:0.25px #3f8a4b;">Ricavi Medi : €XXX,XXX</div>
<div class="t" style="left:2088.95px;top:713.06px;font-size:26.74px;line-height:26.74px;font-weight:400;color:#3d3d42;transform:scaleX(0.7848);-webkit-text-stroke:0.25px #3d3d42;">General repair and maintenance of other equipment (Anonymized)</div>
<div class="t" style="left:2298.19px;top:756.92px;font-size:22.53px;line-height:22.53px;font-weight:400;color:#3f8a4b;transform:scaleX(1.0042);-webkit-text-stroke:0.25px #3f8a4b;">Ricavi Medi</div>
<div class="t" style="left:2440.55px;top:864.54px;font-size:21.80px;line-height:21.80px;font-weight:400;color:#6f7583;transform:scaleX(0.8728);-webkit-text-stroke:0.25px #6f7583;">Cerca...</div>
<div class="t" style="left:2755.70px;top:866.35px;font-size:16.72px;line-height:16.72px;font-weight:700;color:#252a38;transform:scaleX(0.8905);-webkit-text-stroke:0.25px #252a38;">ADESSO</div>
<div class="t" style="left:543.85px;top:928.29px;font-size:19.62px;line-height:19.62px;font-weight:700;color:#f4f5f8;transform:scaleX(0.9768);-webkit-text-stroke:0.20px #f4f5f8;">ID</div>
<div class="t" style="left:655.60px;top:928.29px;font-size:19.62px;line-height:19.62px;font-weight:700;color:#f4f5f8;transform:scaleX(0.9310);-webkit-text-stroke:0.20px #f4f5f8;">PARTITA_IVA</div>
<div class="t" style="left:862.93px;top:928.29px;font-size:19.62px;line-height:19.62px;font-weight:700;color:#f4f5f8;transform:scaleX(0.9120);-webkit-text-stroke:0.20px #f4f5f8;">NUMERO_REA</div>
<div class="t" style="left:1084.33px;top:928.29px;font-size:19.62px;line-height:19.62px;font-weight:700;color:#f4f5f8;transform:scaleX(0.9084);-webkit-text-stroke:0.20px #f4f5f8;">RAGIONE_SOCIALE</div>
<div class="t" style="left:1477.52px;top:928.29px;font-size:19.62px;line-height:19.62px;font-weight:700;color:#f4f5f8;transform:scaleX(0.9210);-webkit-text-stroke:0.20px #f4f5f8;">NATURA_GIURIDICA</div>
<div class="t" style="left:1835.88px;top:928.29px;font-size:19.62px;line-height:19.62px;font-weight:700;color:#f4f5f8;transform:scaleX(0.9190);-webkit-text-stroke:0.20px #f4f5f8;">OPERATIVA</div>
<div class="t" style="left:2031.64px;top:928.29px;font-size:19.62px;line-height:19.62px;font-weight:700;color:#f4f5f8;transform:scaleX(0.9245);-webkit-text-stroke:0.20px #f4f5f8;">STATO_OPERATIVИA</div>
<div class="t" style="left:2310.08px;top:928.29px;font-size:19.62px;line-height:19.62px;font-weight:700;color:#f4f5f8;transform:scaleX(0.9119);-webkit-text-stroke:0.20px #f4f5f8;">CODICE_ATECO_INFOCAMERE</div>
<div class="t" style="left:2673.63px;top:928.29px;font-size:19.62px;line-height:19.62px;font-weight:700;color:#f4f5f8;transform:scaleX(0.9120);-webkit-text-stroke:0.20px #f4f5f8;">DESCRIZIONE_ATECO_INFOCAMERE</div>
<div class="t" style="left:544.49px;top:987.23px;font-size:26.89px;line-height:26.89px;font-weight:400;color:#1f2030;transform:scaleX(0.8000);-webkit-text-stroke:0.45px #1f2030;">1</div>
<div class="t" style="left:656.29px;top:987.23px;font-size:26.89px;line-height:26.89px;font-weight:400;color:#1f2030;transform:scaleX(0.7650);-webkit-text-stroke:0.45px #1f2030;">XXXX00XXXXX</div>
<div class="t" style="left:862.38px;top:987.23px;font-size:26.89px;line-height:26.89px;font-weight:400;color:#1f2030;transform:scaleX(0.7534);-webkit-text-stroke:0.45px #1f2030;">REA1XXXX</div>
<div class="t" style="left:1084.52px;top:987.23px;font-size:26.89px;line-height:26.89px;font-weight:400;color:#1f2030;transform:scaleX(0.8150);-webkit-text-stroke:0.45px #1f2030;">Società Alfa S.p.A.</div>
<div class="t" style="left:1477.73px;top:987.23px;font-size:26.89px;line-height:26.89px;font-weight:400;color:#1f2030;transform:scaleX(0.8084);-webkit-text-stroke:0.45px #1f2030;">Società Per Azioni</div>
<div class="t" style="left:1835.90px;top:987.23px;font-size:26.89px;line-height:26.89px;font-weight:400;color:#1f2030;transform:scaleX(0.8652);-webkit-text-stroke:0.45px #1f2030;">0</div>
<div class="t" style="left:2032.00px;top:987.23px;font-size:26.89px;line-height:26.89px;font-weight:400;color:#1f2030;transform:scaleX(0.8433);-webkit-text-stroke:0.45px #1f2030;">Attiva</div>
<div class="t" style="left:2309.23px;top:987.23px;font-size:26.89px;line-height:26.89px;font-weight:400;color:#1f2030;transform:scaleX(0.8320);-webkit-text-stroke:0.45px #1f2030;">11.01.00</div>
<div class="t" style="left:2673.60px;top:987.23px;font-size:26.89px;line-height:26.89px;font-weight:400;color:#1f2030;transform:scaleX(0.8160);-webkit-text-stroke:0.45px #1f2030;">Generic manufacturing</div>
<div class="t" style="left:544.92px;top:1060.43px;font-size:26.89px;line-height:26.89px;font-weight:400;color:#1f2030;transform:scaleX(0.8000);-webkit-text-stroke:0.45px #1f2030;">2</div>
<div class="t" style="left:656.29px;top:1060.43px;font-size:26.89px;line-height:26.89px;font-weight:400;color:#1f2030;transform:scaleX(0.7650);-webkit-text-stroke:0.45px #1f2030;">XXXX00XXXXX</div>
<div class="t" style="left:862.38px;top:1060.43px;font-size:26.89px;line-height:26.89px;font-weight:400;color:#1f2030;transform:scaleX(0.7534);-webkit-text-stroke:0.45px #1f2030;">REA1XXXX</div>
<div class="t" style="left:1084.52px;top:1060.43px;font-size:26.89px;line-height:26.89px;font-weight:400;color:#1f2030;transform:scaleX(0.8150);-webkit-text-stroke:0.45px #1f2030;">Società Beta S.r.l.</div>
<div class="t" style="left:1477.73px;top:1060.43px;font-size:26.89px;line-height:26.89px;font-weight:400;color:#1f2030;transform:scaleX(0.8084);-webkit-text-stroke:0.45px #1f2030;">Società Per Azioni</div>
<div class="t" style="left:1835.90px;top:1060.43px;font-size:26.89px;line-height:26.89px;font-weight:400;color:#1f2030;transform:scaleX(0.8652);-webkit-text-stroke:0.45px #1f2030;">0</div>
<div class="t" style="left:2032.00px;top:1060.43px;font-size:26.89px;line-height:26.89px;font-weight:400;color:#1f2030;transform:scaleX(0.8433);-webkit-text-stroke:0.45px #1f2030;">Attiva</div>
<div class="t" style="left:2309.68px;top:1060.43px;font-size:26.89px;line-height:26.89px;font-weight:400;color:#1f2030;transform:scaleX(0.8320);-webkit-text-stroke:0.45px #1f2030;">25.12.10</div>
<div class="t" style="left:2672.94px;top:1060.43px;font-size:26.89px;line-height:26.89px;font-weight:400;color:#1f2030;transform:scaleX(0.8160);-webkit-text-stroke:0.45px #1f2030;">Business services</div>
<div class="t" style="left:545.35px;top:1133.63px;font-size:26.89px;line-height:26.89px;font-weight:400;color:#1f2030;transform:scaleX(0.8000);-webkit-text-stroke:0.45px #1f2030;">3</div>
<div class="t" style="left:656.29px;top:1133.63px;font-size:26.89px;line-height:26.89px;font-weight:400;color:#1f2030;transform:scaleX(0.7650);-webkit-text-stroke:0.45px #1f2030;">XXXX00XXXXX</div>
<div class="t" style="left:862.38px;top:1133.63px;font-size:26.89px;line-height:26.89px;font-weight:400;color:#1f2030;transform:scaleX(0.7534);-webkit-text-stroke:0.45px #1f2030;">REA1XXXX</div>
<div class="t" style="left:1084.30px;top:1133.63px;font-size:26.89px;line-height:26.89px;font-weight:400;color:#1f2030;transform:scaleX(0.8150);-webkit-text-stroke:0.45px #1f2030;">Gamma Holding S.p.A.</div>
<div class="t" style="left:1477.73px;top:1133.63px;font-size:26.89px;line-height:26.89px;font-weight:400;color:#1f2030;transform:scaleX(0.8084);-webkit-text-stroke:0.45px #1f2030;">Società Per Azioni</div>
<div class="t" style="left:1835.90px;top:1133.63px;font-size:26.89px;line-height:26.89px;font-weight:400;color:#1f2030;transform:scaleX(0.8652);-webkit-text-stroke:0.45px #1f2030;">0</div>
<div class="t" style="left:2032.00px;top:1133.63px;font-size:26.89px;line-height:26.89px;font-weight:400;color:#1f2030;transform:scaleX(0.8433);-webkit-text-stroke:0.45px #1f2030;">Attiva</div>
<div class="t" style="left:2309.68px;top:1133.63px;font-size:26.89px;line-height:26.89px;font-weight:400;color:#1f2030;transform:scaleX(0.8320);-webkit-text-stroke:0.45px #1f2030;">20.30.00</div>
<div class="t" style="left:2673.60px;top:1133.63px;font-size:26.89px;line-height:26.89px;font-weight:400;color:#1f2030;transform:scaleX(0.8160);-webkit-text-stroke:0.45px #1f2030;">Consulting services</div>
<div class="t" style="left:545.57px;top:1206.83px;font-size:26.89px;line-height:26.89px;font-weight:400;color:#1f2030;transform:scaleX(0.8000);-webkit-text-stroke:0.45px #1f2030;">4</div>
<div class="t" style="left:656.29px;top:1206.83px;font-size:26.89px;line-height:26.89px;font-weight:400;color:#1f2030;transform:scaleX(0.7650);-webkit-text-stroke:0.45px #1f2030;">XXXX00XXXXX</div>
<div class="t" style="left:862.38px;top:1206.83px;font-size:26.89px;line-height:26.89px;font-weight:400;color:#1f2030;transform:scaleX(0.7534);-webkit-text-stroke:0.45px #1f2030;">REA1XXXX</div>
<div class="t" style="left:1083.65px;top:1206.83px;font-size:26.89px;line-height:26.89px;font-weight:400;color:#1f2030;transform:scaleX(0.8150);-webkit-text-stroke:0.45px #1f2030;">Delta Logistics S.r.l.</div>
<div class="t" style="left:1477.73px;top:1206.83px;font-size:26.89px;line-height:26.89px;font-weight:400;color:#1f2030;transform:scaleX(0.8084);-webkit-text-stroke:0.45px #1f2030;">Società Per Azioni</div>
<div class="t" style="left:1835.90px;top:1206.83px;font-size:26.89px;line-height:26.89px;font-weight:400;color:#1f2030;transform:scaleX(0.8652);-webkit-text-stroke:0.45px #1f2030;">0</div>
<div class="t" style="left:2032.00px;top:1206.83px;font-size:26.89px;line-height:26.89px;font-weight:400;color:#1f2030;transform:scaleX(0.8433);-webkit-text-stroke:0.45px #1f2030;">Attiva</div>
<div class="t" style="left:2309.68px;top:1206.83px;font-size:26.89px;line-height:26.89px;font-weight:400;color:#1f2030;transform:scaleX(0.8320);-webkit-text-stroke:0.45px #1f2030;">25.40.00</div>
<div class="t" style="left:2672.94px;top:1206.83px;font-size:26.89px;line-height:26.89px;font-weight:400;color:#1f2030;transform:scaleX(0.8160);-webkit-text-stroke:0.45px #1f2030;">Business services</div>
<div class="t" style="left:545.14px;top:1280.03px;font-size:26.89px;line-height:26.89px;font-weight:400;color:#1f2030;transform:scaleX(0.8000);-webkit-text-stroke:0.45px #1f2030;">5</div>
<div class="t" style="left:656.29px;top:1280.03px;font-size:26.89px;line-height:26.89px;font-weight:400;color:#1f2030;transform:scaleX(0.7650);-webkit-text-stroke:0.45px #1f2030;">XXXX00XXXXX</div>
<div class="t" style="left:862.38px;top:1280.03px;font-size:26.89px;line-height:26.89px;font-weight:400;color:#1f2030;transform:scaleX(0.7534);-webkit-text-stroke:0.45px #1f2030;">REA1XXXX</div>
<div class="t" style="left:1083.65px;top:1280.03px;font-size:26.89px;line-height:26.89px;font-weight:400;color:#1f2030;transform:scaleX(0.8150);-webkit-text-stroke:0.45px #1f2030;">Epsilon Solutions S.p.A.</div>
<div class="t" style="left:1477.73px;top:1280.03px;font-size:26.89px;line-height:26.89px;font-weight:400;color:#1f2030;transform:scaleX(0.8084);-webkit-text-stroke:0.45px #1f2030;">Società Per Azioni</div>
<div class="t" style="left:1835.90px;top:1280.03px;font-size:26.89px;line-height:26.89px;font-weight:400;color:#1f2030;transform:scaleX(0.8652);-webkit-text-stroke:0.45px #1f2030;">0</div>
<div class="t" style="left:2032.00px;top:1280.03px;font-size:26.89px;line-height:26.89px;font-weight:400;color:#1f2030;transform:scaleX(0.8433);-webkit-text-stroke:0.45px #1f2030;">Attiva</div>
<div class="t" style="left:2309.68px;top:1280.03px;font-size:26.89px;line-height:26.89px;font-weight:400;color:#1f2030;transform:scaleX(0.8320);-webkit-text-stroke:0.45px #1f2030;">25.40.99</div>
<div class="t" style="left:2672.94px;top:1280.03px;font-size:26.89px;line-height:26.89px;font-weight:400;color:#1f2030;transform:scaleX(0.8160);-webkit-text-stroke:0.45px #1f2030;">Business services</div>
<div class="t" style="left:544.92px;top:1353.23px;font-size:26.89px;line-height:26.89px;font-weight:400;color:#1f2030;transform:scaleX(0.8000);-webkit-text-stroke:0.45px #1f2030;">6</div>
<div class="t" style="left:656.29px;top:1353.23px;font-size:26.89px;line-height:26.89px;font-weight:400;color:#1f2030;transform:scaleX(0.7650);-webkit-text-stroke:0.45px #1f2030;">XXXX00XXXXX</div>
<div class="t" style="left:862.38px;top:1353.23px;font-size:26.89px;line-height:26.89px;font-weight:400;color:#1f2030;transform:scaleX(0.7534);-webkit-text-stroke:0.45px #1f2030;">REA1XXXX</div>
<div class="t" style="left:1084.74px;top:1353.23px;font-size:26.89px;line-height:26.89px;font-weight:400;color:#1f2030;transform:scaleX(0.8150);-webkit-text-stroke:0.45px #1f2030;">Zeta Industriale S.p.A.</div>
<div class="t" style="left:1477.73px;top:1353.23px;font-size:26.89px;line-height:26.89px;font-weight:400;color:#1f2030;transform:scaleX(0.8084);-webkit-text-stroke:0.45px #1f2030;">Società Per Azioni</div>
<div class="t" style="left:1835.90px;top:1353.23px;font-size:26.89px;line-height:26.89px;font-weight:400;color:#1f2030;transform:scaleX(0.8652);-webkit-text-stroke:0.45px #1f2030;">0</div>
<div class="t" style="left:2032.00px;top:1353.23px;font-size:26.89px;line-height:26.89px;font-weight:400;color:#1f2030;transform:scaleX(0.8433);-webkit-text-stroke:0.45px #1f2030;">Attiva</div>
<div class="t" style="left:2309.68px;top:1353.23px;font-size:26.89px;line-height:26.89px;font-weight:400;color:#1f2030;transform:scaleX(0.8320);-webkit-text-stroke:0.45px #1f2030;">28.29.99</div>
<div class="t" style="left:2673.60px;top:1353.23px;font-size:26.89px;line-height:26.89px;font-weight:400;color:#1f2030;transform:scaleX(0.8160);-webkit-text-stroke:0.45px #1f2030;">Consulting services</div>
<div class="t" style="left:544.92px;top:1426.43px;font-size:26.89px;line-height:26.89px;font-weight:400;color:#1f2030;transform:scaleX(0.8000);-webkit-text-stroke:0.45px #1f2030;">7</div>
<div class="t" style="left:656.29px;top:1426.43px;font-size:26.89px;line-height:26.89px;font-weight:400;color:#1f2030;transform:scaleX(0.7650);-webkit-text-stroke:0.45px #1f2030;">XXXX00XXXXX</div>
<div class="t" style="left:862.38px;top:1426.43px;font-size:26.89px;line-height:26.89px;font-weight:400;color:#1f2030;transform:scaleX(0.7534);-webkit-text-stroke:0.45px #1f2030;">REA1XXXX</div>
<div class="t" style="left:1083.65px;top:1426.43px;font-size:26.89px;line-height:26.89px;font-weight:400;color:#1f2030;transform:scaleX(0.8150);-webkit-text-stroke:0.45px #1f2030;">Eta Partners S.r.l.</div>
<div class="t" style="left:1477.73px;top:1426.43px;font-size:26.89px;line-height:26.89px;font-weight:400;color:#1f2030;transform:scaleX(0.8084);-webkit-text-stroke:0.45px #1f2030;">Società Per Azioni</div>
<div class="t" style="left:1835.90px;top:1426.43px;font-size:26.89px;line-height:26.89px;font-weight:400;color:#1f2030;transform:scaleX(0.8652);-webkit-text-stroke:0.45px #1f2030;">0</div>
<div class="t" style="left:2032.00px;top:1426.43px;font-size:26.89px;line-height:26.89px;font-weight:400;color:#1f2030;transform:scaleX(0.8433);-webkit-text-stroke:0.45px #1f2030;">Attiva</div>
<div class="t" style="left:2309.23px;top:1426.43px;font-size:26.89px;line-height:26.89px;font-weight:400;color:#1f2030;transform:scaleX(0.8320);-webkit-text-stroke:0.45px #1f2030;">18.30.00</div>
<div class="t" style="left:2673.60px;top:1426.43px;font-size:26.89px;line-height:26.89px;font-weight:400;color:#1f2030;transform:scaleX(0.8160);-webkit-text-stroke:0.45px #1f2030;">Consulting services</div>
<div style="position:absolute;left:2954.5px;top:890px;width:30px;height:560px;background:#e9ecf2"></div>
</body></html>
